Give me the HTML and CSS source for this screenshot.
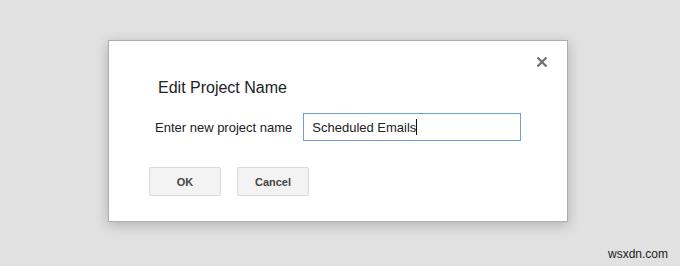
FILE: index.html
```html
<!DOCTYPE html>
<html>
<head>
<meta charset="utf-8">
<link rel="stylesheet" href="styles.css">
</head>
<body>
<div class="page">
  <div class="dialog">
    <button class="close" aria-label="Close">
      <svg width="12" height="12" viewBox="0 0 12 12"><path d="M1.5 1.5 L10.5 10.5 M10.5 1.5 L1.5 10.5" stroke="#6f6f6f" stroke-width="2.2" stroke-linecap="butt"/></svg>
    </button>
    <div class="title">Edit Project Name</div>
    <div class="row">
      <label class="label">Enter new project name</label>
      <div class="input"><span class="value">Scheduled Emails</span><span class="caret"></span></div>
    </div>
    <div class="buttons">
      <button class="btn">OK</button>
      <button class="btn">Cancel</button>
    </div>
  </div>
  <div class="watermark">wsxdn.com</div>
</div>
</body>
</html>
```
FILE: styles.css
```css
html, body {
  margin: 0;
  padding: 0;
}
body {
  background: #e1e1e1;
  font-family: Arial, "Liberation Sans", sans-serif;
  width: 680px;
  height: 266px;
  overflow: hidden;
}
.page {
  position: relative;
  width: 680px;
  height: 266px;
  padding: 40px 0 0 108px;
  box-sizing: border-box;
}
.dialog {
  position: relative;
  width: 458px;
  height: 143px;
  background: #fff;
  border: 1px solid #adadad;
  box-shadow: 0 3px 12px rgba(0, 0, 0, 0.22);
  padding-top: 37px;
  box-sizing: content-box;
}
.close {
  position: absolute;
  top: 15px;
  right: 19px;
  width: 12px;
  height: 12px;
  padding: 0;
  border: 0;
  background: none;
  display: block;
}
.close svg {
  display: block;
}
.title {
  padding-left: 49px;
  font-size: 16px;
  line-height: 20px;
  color: #222;
}
.row {
  display: flex;
  align-items: center;
  margin-top: 15px;
  padding-left: 46px;
  gap: 11px;
}
.label {
  font-size: 13px;
  color: #222;
}
.input {
  width: 208px;
  height: 26px;
  border: 1px solid #6f9ddc;
  padding-left: 8px;
  box-sizing: content-box;
  display: flex;
  align-items: center;
  font-size: 13px;
  color: #222;
}
.value {
  display: block;
}
.caret {
  display: block;
  width: 1px;
  height: 16px;
  background: #111;
}
.buttons {
  display: flex;
  gap: 16px;
  margin-top: 26px;
  padding-left: 40px;
}
.btn {
  width: 72px;
  height: 29px;
  background: #f3f3f3;
  border: 1px solid #dadada;
  border-radius: 2px;
  font-family: Arial, "Liberation Sans", sans-serif;
  font-weight: bold;
  font-size: 11px;
  color: #444;
  padding: 0;
  box-sizing: border-box;
}
.watermark {
  position: absolute;
  right: 12px;
  bottom: 5px;
  font-size: 12px;
  color: #222;
}
```
